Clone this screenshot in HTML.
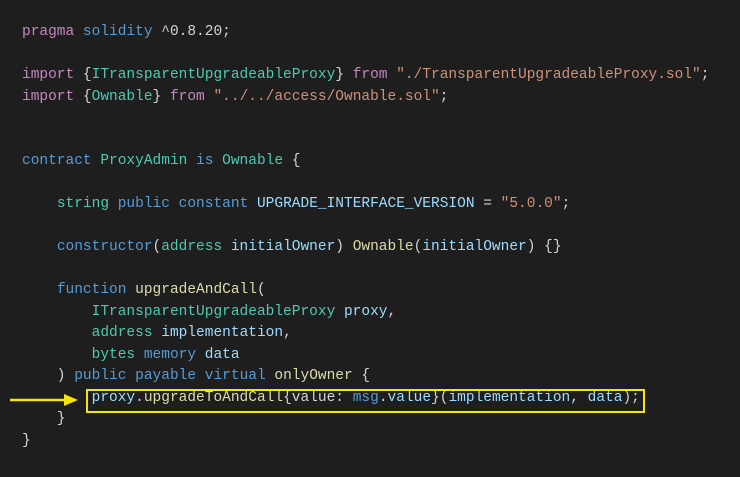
<!DOCTYPE html>
<html><head><style>
body{margin:0;background:#1e1e1e;width:740px;height:477px;overflow:hidden;position:relative}
pre{position:absolute;left:22px;top:22px;margin:0;font-family:"Liberation Mono",monospace;font-size:14.5px;line-height:21.5px;color:#d4d4d4}
.k{color:#c586c0}.b{color:#569cd6}.t{color:#4ec9b0}.s{color:#ce9178}.f{color:#dcdcaa}.v{color:#9cdcfe}
.box{position:absolute;left:86px;top:389px;width:555px;height:20px;border:2px solid #f5e50a}
</style></head><body>
<pre><span class="k">pragma</span> <span class="b">solidity</span> ^0.8.20;

<span class="k">import</span> {<span class="t">ITransparentUpgradeableProxy</span>} <span class="k">from</span> <span class="s">"./TransparentUpgradeableProxy.sol"</span>;
<span class="k">import</span> {<span class="t">Ownable</span>} <span class="k">from</span> <span class="s">"../../access/Ownable.sol"</span>;


<span class="b">contract</span> <span class="t">ProxyAdmin</span> <span class="b">is</span> <span class="t">Ownable</span> {

    <span class="t">string</span> <span class="b">public</span> <span class="b">constant</span> <span class="v">UPGRADE_INTERFACE_VERSION</span> = <span class="s">"5.0.0"</span>;

    <span class="b">constructor</span>(<span class="t">address</span> <span class="v">initialOwner</span>) <span class="f">Ownable</span>(<span class="v">initialOwner</span>) {}

    <span class="b">function</span> <span class="f">upgradeAndCall</span>(
        <span class="t">ITransparentUpgradeableProxy</span> <span class="v">proxy</span>,
        <span class="t">address</span> <span class="v">implementation</span>,
        <span class="t">bytes</span> <span class="b">memory</span> <span class="v">data</span>
    ) <span class="b">public</span> <span class="b">payable</span> <span class="b">virtual</span> <span class="f">onlyOwner</span> {
        <span class="v">proxy</span>.<span class="f">upgradeToAndCall</span>{value: <span class="b">msg</span>.<span class="v">value</span>}(<span class="v">implementation</span>, <span class="v">data</span>);
    }
}</pre>
<div class="box"></div>
<svg style="position:absolute;left:0;top:390px" width="85" height="20"><line x1="10" y1="10" x2="66" y2="10" stroke="#f5e50a" stroke-width="2.5"/><polygon points="64,4 78,10 64,16" fill="#f5e50a"/></svg>
</body></html>
